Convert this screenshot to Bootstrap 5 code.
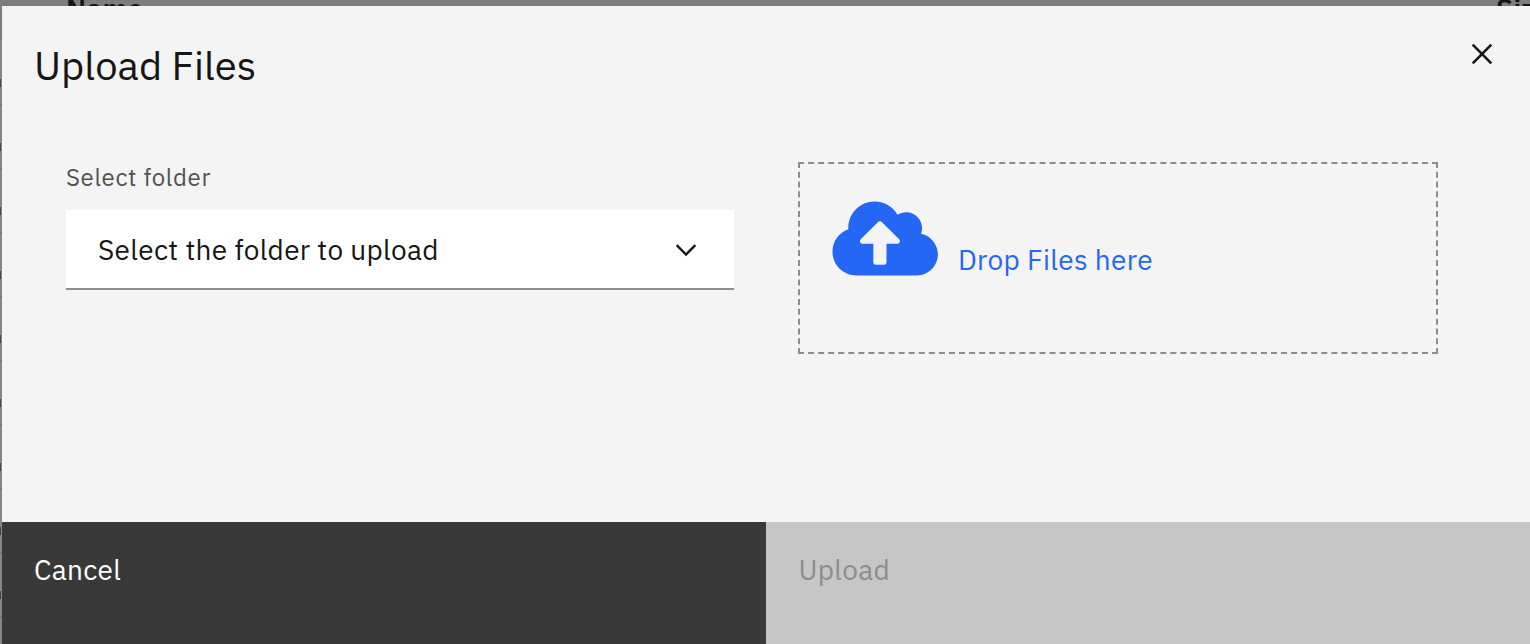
<!DOCTYPE html>
<html lang="en">
<head>
<meta charset="utf-8">
<title>Upload Files</title>
<meta name="viewport" content="width=device-width, initial-scale=1">
<link href="https://cdn.jsdelivr.net/npm/bootstrap@5.3.0/dist/css/bootstrap.min.css" rel="stylesheet">
<style>
  body { font-family: "IBM Plex Sans", Roboto, "Liberation Sans", sans-serif; font-size: 28px; letter-spacing: .32px; color: #161616; height: 644px; }
  /* dimmed table behind the dialog */
  .backdrop-table { background: #7d7d7d; }
  .table-head { height: 40px; font-weight: 600; line-height: 40px; padding: 0 0 0 66px; margin-top: -11px; margin-bottom: 11px; width: 1600px; }
  .name-col { width: 1430px; }
  .table-rows { height: 604px; width: 2px; background: repeating-linear-gradient(#868686 0 62px, #787878 62px 64px) 0 2px; }
  .row-mark { flex: none; height: 8px; width: 1px; background: #444; margin-top: 39px; margin-bottom: 17px; }
  .upload-dialog { background: #f4f4f4; margin: 6px 0 0 2px; }
  .dialog-head { height: 156px; }
  .dialog-title { font-size: 40px; line-height: 50px; letter-spacing: 0; padding: 34px 0 0 32px; font-weight: 400; }
  .close-btn { padding: 32px 32px 0 0; line-height: 0; }
  .dialog-body { height: 360px; padding: 0 92px 0 64px; }
  .field-col { width: 668px; }
  .field-label { font-size: 24px; line-height: 32px; letter-spacing: .64px; color: #525252; margin-top: -1px; margin-bottom: 17px; }
  .folder-select { height: 80px; background: #fff; border-bottom: 2px solid #8d8d8d; padding: 2px 32px 0; }
  .drop-zone { width: 640px; height: 192px; border: 2px dashed #8d8d8d; color: #2467f5; padding: 32px 0 0 32px; }
  .drop-text { line-height: 36px; margin: 46px 0 0 20px; }
  .dialog-footer { height: 122px; }
  .footer-btn { border: 0; border-radius: 0; text-align: left; padding: 30px 32px; line-height: 36px; font-size: 28px; letter-spacing: .32px; width: 764px; }
  .cancel-btn { background: #393939; color: #fff; }
  .send-btn { background: #c6c6c6; color: #8d8d8d; padding-left: 32.5px; }
</style>
</head>
<body class="position-relative overflow-hidden m-0">
  <div class="backdrop-table position-absolute top-0 start-0 w-100 h-100 overflow-hidden" aria-hidden="true">
    <div class="table-head d-flex"><span class="name-col">Name</span><span>Size</span></div>
    <div class="table-rows overflow-hidden d-flex flex-column">
      <i class="row-mark"></i><i class="row-mark"></i><i class="row-mark"></i><i class="row-mark"></i><i class="row-mark"></i><i class="row-mark"></i><i class="row-mark"></i><i class="row-mark"></i><i class="row-mark"></i>
    </div>
  </div>
  <div class="d-flex flex-column h-100 position-relative">
    <section class="upload-dialog flex-grow-1 d-flex flex-column" role="dialog" aria-labelledby="dialogTitle">
      <header class="dialog-head d-flex justify-content-between align-items-start">
        <h1 class="dialog-title m-0" id="dialogTitle">Upload Files</h1>
        <button class="close-btn border-0 bg-transparent" aria-label="Close">
          <svg width="32" height="32" viewBox="0 0 32 32" fill="none" stroke="#161616" stroke-width="2.6"><path d="M6.7 6.7 25.3 25.3M25.3 6.7 6.7 25.3"/></svg>
        </button>
      </header>
      <div class="dialog-body d-flex justify-content-between align-items-start">
        <div class="field-col">
          <div class="field-label">Select folder</div>
          <div class="folder-select d-flex align-items-center justify-content-between">
            <span>Select the folder to upload</span>
            <svg width="32" height="32" viewBox="0 0 32 32" fill="none" stroke="#161616" stroke-width="2.4"><path d="M6.7 11.2 16 20.5 25.3 11.2"/></svg>
          </div>
        </div>
        <div class="drop-zone d-flex align-items-start">
          <svg width="106" height="85" viewBox="-3 -2 643.6 516" fill="currentColor"><path d="M537.6 226.6c4.1-10.7 6.4-22.4 6.4-34.6 0-53-43-96-96-96-19.7 0-38.1 6-53.3 16.2C367 64.2 315.3 32 256 32c-88.4 0-160 71.6-160 160 0 2.7.1 5.4.2 8.1C40.2 219.8 0 273.2 0 336c0 79.5 64.5 144 144 144h368c70.7 0 128-57.3 128-128 0-61.9-44-113.6-102.4-125.4zM393.4 288H328v112c0 8.8-7.2 16-16 16h-48c-8.8 0-16-7.2-16-16V288h-65.4c-14.3 0-21.4-17.2-11.3-27.3l105.4-105.4c6.2-6.2 16.4-6.2 22.6 0l105.4 105.4c10.1 10.1 2.9 27.3-11.3 27.3z"/></svg>
          <div class="drop-text">Drop Files here</div>
        </div>
      </div>
      <footer class="dialog-footer d-flex align-items-stretch">
        <button class="footer-btn cancel-btn d-flex align-items-start">Cancel</button>
        <button class="footer-btn send-btn d-flex align-items-start" disabled>Upload</button>
      </footer>
    </section>
  </div>
<script src="https://cdn.jsdelivr.net/npm/bootstrap@5.3.0/dist/js/bootstrap.bundle.min.js"></script>
</body>
</html>
